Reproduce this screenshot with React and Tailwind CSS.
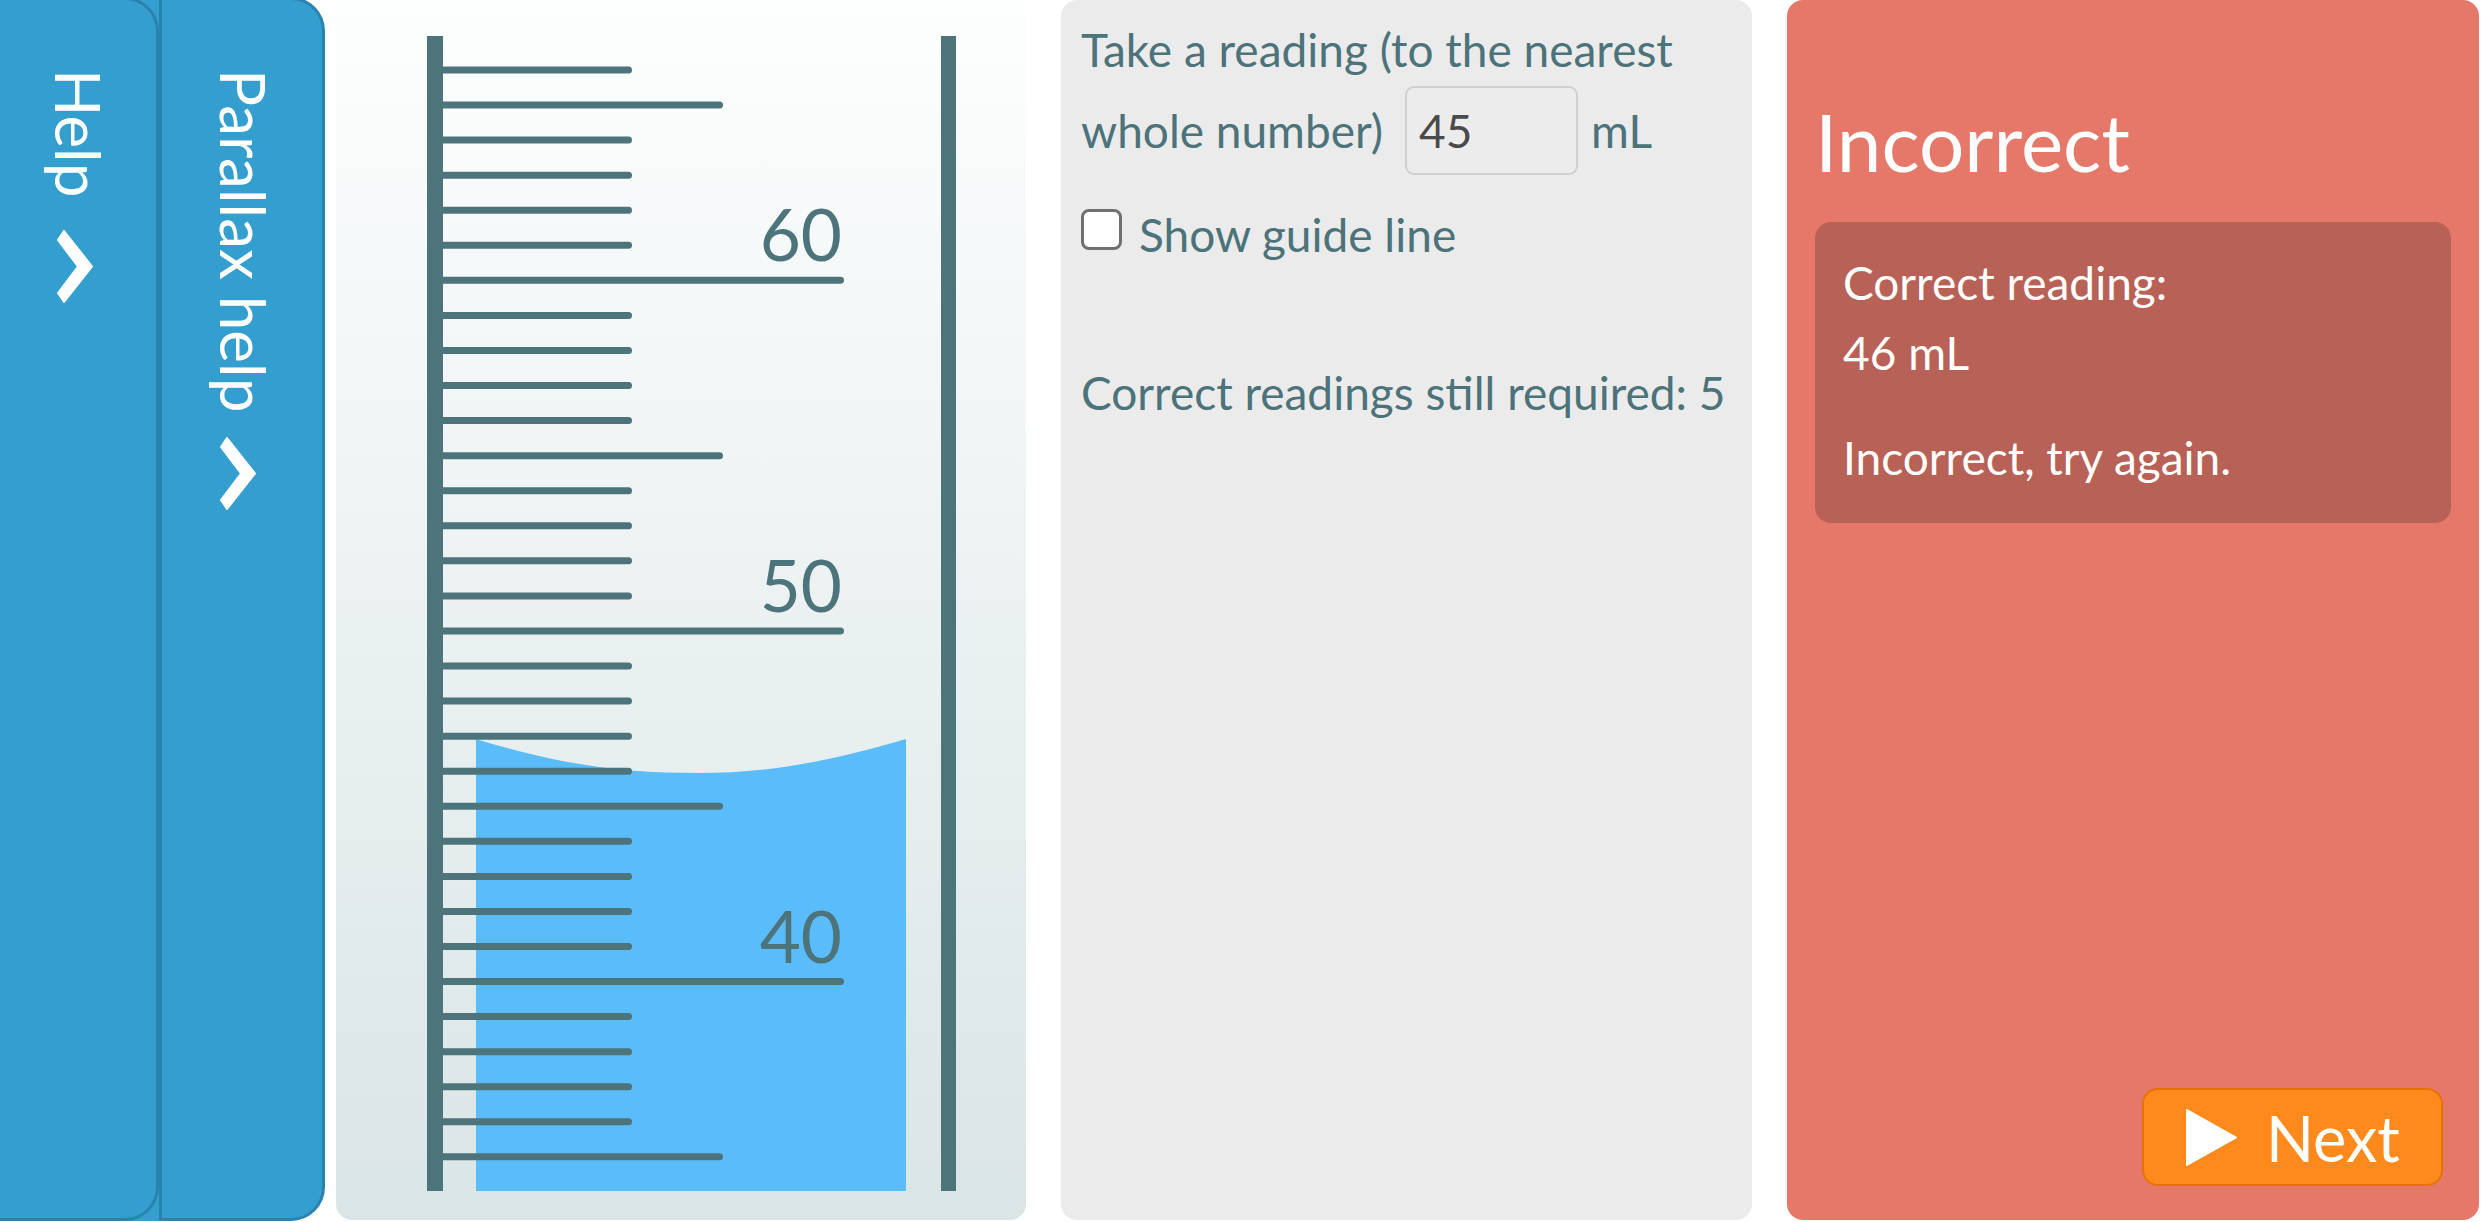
import React from 'react';

const ink = '#4d747b';

// tick i -> y position in the cylinder panel
const tickY = (i) => 70 + 35.06 * i;

function Chevron({ className }) {
  return (
    <svg className={className} width="36" height="73" viewBox="0 0 36 73">
      <polygon
        points="7,1 35,36.5 7,72 1,63 21,36.5 1,10"
        fill="white"
        stroke="white"
        strokeWidth="2"
        strokeLinejoin="round"
      />
    </svg>
  );
}

function SideTabs() {
  return (
    <div className="flex -mt-[3px] h-[1224px] shrink-0">
      <div className="w-[159px] bg-[#349fcf]">
        <div className="h-full flex flex-col bg-[#349fcf] border-t-[3px] border-r-[3px] border-b-[3px] border-[#2b82ae] rounded-r-[34px] pt-[69px]">
          <span className="self-start [writing-mode:vertical-rl] text-[62px] leading-[62px] text-white ml-[48px]">Help</span>
          <Chevron className="self-start mt-[32px] ml-[57px]" />
        </div>
      </div>
      <div className="w-[166px] flex flex-col bg-[#349fcf] border-t-[3px] border-l-[3px] border-r-[3px] border-b-[3px] border-[#2b82ae] rounded-r-[34px] pt-[69px]">
        <span className="self-start [writing-mode:vertical-rl] text-[62px] leading-[62px] text-white ml-[51px]">Parallax help</span>
        <Chevron className="self-start mt-[25px] ml-[58px]" />
      </div>
    </div>
  );
}

function Cylinder() {
  const ticks = Array.from({ length: 32 }, (_, i) => {
    let end = 296;
    if ((i - 1) % 5 === 0) end = ((i - 1) / 5) % 2 === 1 ? 508 : 387;
    return { y: tickY(i), end };
  });
  const labels = [
    { i: 6, text: '60' },
    { i: 16, text: '50' },
    { i: 26, text: '40' },
  ];

  return (
    <div className="ml-[11px] w-[690px] h-[1220px] shrink-0 rounded-[16px] bg-linear-to-b from-[#fdfefe] to-[#dae5e6]">
      <svg width="690" height="1220" viewBox="0 0 690 1220">
        <path
          d="M140,739 C228,766 290,773 361,773 C432,773 492,762 570,739 L570,1191 L140,1191 Z"
          fill="#5abcf9"
        />
        {ticks.map((t, i) => (
          <line
            key={i}
            x1="100"
            y1={t.y}
            x2={t.end - 3.5}
            y2={t.y}
            stroke={ink}
            strokeWidth="7"
            strokeLinecap="round"
          />
        ))}
        {labels.map((l) => (
          <text
            key={l.text}
            x="506"
            y={tickY(l.i) - 19}
            textAnchor="end"
            fontFamily="Lato, sans-serif"
            fontSize="71"
            fill={ink}
          >
            {l.text}
          </text>
        ))}
        <rect x="91" y="36" width="16" height="1155" fill={ink} />
        <rect x="605" y="36" width="15" height="1155" fill={ink} />
      </svg>
    </div>
  );
}

function ReadingPanel() {
  return (
    <div className="ml-[35px] w-[691px] h-[1220px] shrink-0 rounded-[16px] bg-[#ebebeb] pl-[20px] pt-[15px] text-[46px] leading-[69px] text-[#4c737a]">
      <div>Take a reading (to the nearest</div>
      <div className="mt-[2px] h-[89px] flex items-center">
        <span>whole number)</span>
        <div className="ml-[22px] w-[173px] h-[89px] rounded-[9px] border-2 border-[#d0d0d0] bg-[#ececec] pl-[12px] flex items-center text-[#4a4a4a]">
          45
        </div>
        <span className="ml-[13px]">mL</span>
      </div>
      <div className="mt-[25px] flex items-start">
        <div className="mt-[9px] w-[41px] h-[41px] rounded-[8px] border-[3px] border-[#707070] bg-white" />
        <span className="ml-[17px]">Show guide line</span>
      </div>
      <div className="mt-[89px]">Correct readings still required: 5</div>
    </div>
  );
}

function FeedbackPanel() {
  return (
    <div className="ml-[35px] w-[692px] h-[1220px] shrink-0 rounded-[16px] bg-[#e57869] px-[28px] pt-[93px] pb-[34px] flex flex-col text-white">
      <h1 className="text-[80px] leading-[96px]">Incorrect</h1>
      <div className="mt-[33px] rounded-[16px] bg-[#b86157] px-[28px] pt-[26px] pb-[30px] text-[46px] leading-[70px]">
        <p>
          Correct reading:
          <br />
          46 mL
        </p>
        <p className="mt-[35px]">Incorrect, try again.</p>
      </div>
      <button className="mt-auto self-end mr-[8px] w-[301px] h-[98px] rounded-[16px] border-2 border-[#e77200] bg-[#fe8a1e] flex items-center pl-[42px]">
        <svg width="51" height="57" viewBox="0 0 51 57">
          <polygon points="1,1 50,28.5 1,56" fill="white" stroke="white" strokeWidth="2" strokeLinejoin="round" />
        </svg>
        <span className="ml-[29px] text-[63px] leading-none text-white">Next</span>
      </button>
    </div>
  );
}

export default function App() {
  return (
    <div className="flex items-start w-[2482px] h-[1222px] overflow-hidden bg-white [font-family:Lato,sans-serif]">
      <SideTabs />
      <Cylinder />
      <ReadingPanel />
      <FeedbackPanel />
    </div>
  );
}
